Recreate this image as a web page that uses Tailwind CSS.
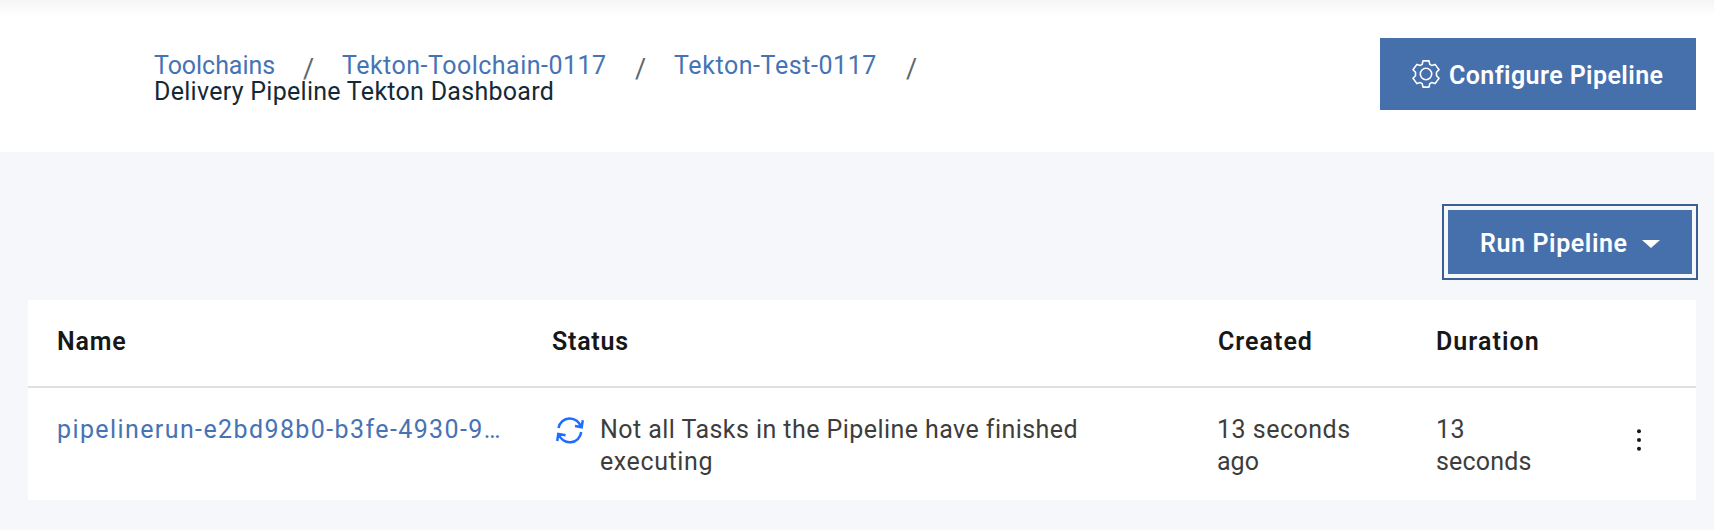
<!DOCTYPE html>
<html lang="en">
<head>
<meta charset="utf-8">
<title>Tekton Dashboard</title>
<script src="https://cdn.jsdelivr.net/npm/@tailwindcss/browser@4"></script>
</head>
<body class="h-[530px] overflow-hidden bg-[#f5f7fb] font-['Roboto',sans-serif] text-[25px] whitespace-nowrap">
<header class="h-[152px] bg-white bg-linear-to-b from-[#f5f5f5] to-white to-[16px] pl-[154px] pr-[18px] flex justify-between items-start">
  <nav class="pt-[53px] leading-[26px] text-[#152935]">
    <div class="flex h-[26px]">
      <a class="w-[150px] tracking-[-0.05px] text-[#4673b3]">Toolchains</a>
      <span class="-ml-[1px] w-[39px] pt-[3px] text-[27px] text-[#5a6872]">/</span>
      <a class="w-[293px] tracking-[0.49px] text-[#4673b3]">Tekton-Toolchain-0117</a>
      <span class="w-[39px] pt-[3px] text-[27px] text-[#5a6872]">/</span>
      <a class="w-[232px] tracking-[0.58px] text-[#4673b3]">Tekton-Test-0117</a>
      <span class="pt-[3px] text-[27px] text-[#5a6872]">/</span>
    </div>
    <div class="tracking-[0.28px]">Delivery Pipeline Tekton Dashboard</div>
  </nav>
  <button class="mt-[38px] h-[72px] w-[316px] bg-[#4670ac] pl-[32px] flex items-center gap-[9px] text-white font-semibold tracking-[0.42px]">
    <svg class="size-7" viewBox="0 0 28 28" fill="none" stroke="#fff" stroke-width="1.6" stroke-linejoin="round">
      <path d="M11 .9h6l.8 3.500 1.800 1 3.500-1L27 9.700l-2.500 2.500v3.600L27 18.300l-3.900 5.300-3.500-1-1.800 1-.8 3.500h-6l-.8-3.500-1.800-1-3.500 1L1 18.300l2.500-2.500v-3.600L1 9.700l3.900-5.300 3.500 1 1.800-1z"/>
      <circle cx="14" cy="14" r="5.700"/>
    </svg>
    <span class="pt-[3px]">Configure Pipeline</span>
  </button>
</header>
<main class="pt-[52px] pl-[28px] pr-[18px]">
  <div class="flex justify-end -mr-[2px]">
    <button class="h-[76px] w-[256px] border-2 border-[#3b5f93] p-1">
      <span class="h-full bg-[#4670ac] pt-[3px] pl-[32px] flex items-center gap-[14px] text-white font-semibold tracking-[0.6px]">
        <span>Run Pipeline</span>
        <svg class="w-[18px] h-[8px]" viewBox="0 0 18 8"><path d="M0 0h18L9 8z" fill="#fff"/></svg>
      </span>
    </button>
  </div>
  <section class="mt-[20px] h-[200px] bg-white">
    <div class="h-[88px] border-b-2 border-[#e0e0e0] pl-[29px] pt-[26px] leading-8 grid grid-cols-[495px_666px_218px_1fr] font-semibold text-[#171717]">
      <div class="tracking-[0.8px]">Name</div>
      <div class="tracking-[0.75px]">Status</div>
      <div class="tracking-[1px]">Created</div>
      <div class="tracking-[1.05px]">Duration</div>
    </div>
    <div class="pl-[29px] pt-[26px] leading-8 grid grid-cols-[495px_665px_219px_1fr_74px] text-[#3d3d3d]">
      <a class="tracking-[1.4px] text-[#4673b3]">pipelinerun-e2bd98b0-b3fe-4930-9…</a>
      <div class="flex pl-[4px]">
        <svg class="w-[28px] h-[28px] mt-[2px]" viewBox="0 0 28 28" fill="none" stroke="#1f6cff" stroke-width="2.500">
          <path d="M2.500 12A11.500 11.500 0 0 1 25 11.200M26.800 4.300L25.700 11.200 19 10"/>
          <path d="M25.200 16A11.500 11.500 0 0 1 2.700 18M1.200 25L2.300 18 9.500 19.200"/>
        </svg>
        <div class="pl-[16px]"><div class="tracking-[0.44px]">Not all Tasks in the Pipeline have finished</div><div class="tracking-[0.6px]">executing</div></div>
      </div>
      <div><div class="tracking-[0.5px]">13 seconds</div><div>ago</div></div>
      <div><div class="tracking-[0.5px]">13</div><div class="tracking-[0.2px]">seconds</div></div>
      <svg class="w-[34px] h-8 mt-[10px]" viewBox="0 0 34 32" fill="#171717"><circle cx="17" cy="7.200" r="2"/><circle cx="17" cy="16" r="2"/><circle cx="17" cy="24.800" r="2"/></svg>
    </div>
  </section>
</main>
</body>
</html>
